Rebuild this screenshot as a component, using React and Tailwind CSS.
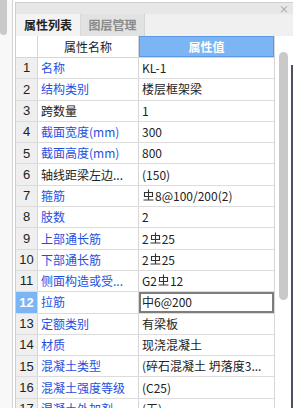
import React from 'react';

const rows = [
  { n: 1, name: '名称', value: 'KL-1', blue: true },
  { n: 2, name: '结构类别', value: '楼层框架梁', blue: true },
  { n: 3, name: '跨数量', value: '1', blue: false },
  { n: 4, name: '截面宽度(mm)', value: '300', blue: true },
  { n: 5, name: '截面高度(mm)', value: '800', blue: true },
  { n: 6, name: '轴线距梁左边...', value: '(150)', blue: false },
  { n: 7, name: '箍筋', value: '#8@100/200(2)', blue: true },
  { n: 8, name: '肢数', value: '2', blue: true },
  { n: 9, name: '上部通长筋', value: '2#25', blue: true },
  { n: 10, name: '下部通长筋', value: '2#25', blue: true },
  { n: 11, name: '侧面构造或受...', value: 'G2#12', blue: true },
  { n: 12, name: '拉筋', value: '中6@200', blue: true, active: true },
  { n: 13, name: '定额类别', value: '有梁板', blue: true },
  { n: 14, name: '材质', value: '现浇混凝土', blue: true },
  { n: 15, name: '混凝土类型', value: '(碎石混凝土 坍落度3...', blue: true },
  { n: 16, name: '混凝土强度等级', value: '(C25)', blue: true },
  { n: 17, name: '混凝土外加剂', value: '(无)', blue: true },
];

// HRB335 rebar mark
function Rebar() {
  return (
    <svg width="11" height="12" viewBox="0 0 11 12" className="inline-block mx-[1px] -mt-[2px]">
      <path d="M5.5 0.5 V11.5 M1.5 3.5 H9.5 V7.5 H1.5 Z M0.5 11 H10.5" stroke="#333" strokeWidth="1.1" fill="none" />
    </svg>
  );
}

function Val({ text }) {
  const parts = text.split('#');
  return (
    <>
      {parts.map((p, i) => (
        <React.Fragment key={i}>
          {i > 0 && <Rebar />}
          {p}
        </React.Fragment>
      ))}
    </>
  );
}

export default function App() {
  return (
    <div
      className="w-[293px] h-[408px] overflow-hidden flex bg-white text-[#222]"
      style={{ fontFamily: '"Noto Sans CJK SC", "Liberation Sans", sans-serif' }}
    >
      <div className="w-[13px] shrink-0 bg-[#f8f8f8] border-r border-[#d4d4d4]">
        <div className="w-[7px] h-[35px] bg-[#c9c9c9] rounded-br-[4px] rounded-bl-[4px]" />
      </div>
      <div className="w-[2px] shrink-0" />
      <div className="flex-1 flex flex-col pt-[2px] min-h-0">
        <div className="h-[12px] shrink-0 bg-[#e7e7e7] border-t border-l border-[#d0d0d0] flex justify-end items-center pr-[4px]">
          <span className="text-[10px] leading-none text-[#9a9a9a]">×</span>
        </div>
        <div className="h-[22px] shrink-0 bg-[#f0f0f0] border-l border-[#d0d0d0] flex items-stretch">
          <div className="w-[65px] bg-[#f3f3f3] border-r border-[#d8d8d8] flex items-center justify-center text-[12px] font-bold text-[#222]">
            属性列表
          </div>
          <div className="w-[64px] bg-[#e2e2e2] border-r border-[#d4d4d4] flex items-center justify-center text-[12px] font-bold text-[#8a8a8a]">
            图层管理
          </div>
        </div>
        <div className="flex-1 min-h-0 overflow-hidden flex border-l border-[#d0d0d0]">
          <div className="w-[258px] shrink-0 flex flex-col">
            <div className="h-[22px] shrink-0 flex border-b border-[#d6d6d6]">
              <div className="w-[22px] border-r border-[#d6d6d6]" />
              <div className="w-[101px] border-r border-[#d6d6d6] flex items-center justify-center text-[12px] text-[#222]">
                属性名称
              </div>
              <div className="flex-1 bg-[#7cb5f4] border border-[#5c9ae6] flex items-center justify-center text-[12px] font-bold text-white">
                属性值
              </div>
            </div>
            {rows.map((r) => (
              <div key={r.n} className="h-[21.3px] shrink-0 flex border-b border-[#dcdcdc]">
                <div
                  className={
                    r.active
                      ? 'w-[22px] bg-[#7cb5f4] border-r border-[#d6d6d6] flex items-center justify-center text-[13px] font-bold text-white'
                      : 'w-[22px] bg-[#efefef] border-r border-[#d6d6d6] flex items-center justify-center text-[13px] text-[#222]'
                  }
                  style={{ fontFamily: '"Liberation Sans", sans-serif' }}
                >
                  {r.n}
                </div>
                <div
                  className={
                    r.blue
                      ? 'w-[101px] border-r border-[#d6d6d6] flex items-center pl-[3px] text-[12px] text-[#1f4fe0] whitespace-nowrap overflow-hidden'
                      : 'w-[101px] border-r border-[#d6d6d6] flex items-center pl-[3px] text-[12px] text-[#222] whitespace-nowrap overflow-hidden'
                  }
                >
                  {r.name}
                </div>
                <div
                  className={
                    r.active
                      ? 'flex-1 border-2 border-[#7d7d7d] flex items-center pl-[1px] text-[12px] text-[#222] whitespace-nowrap overflow-hidden'
                      : 'flex-1 flex items-center pl-[3px] text-[12px] text-[#222] whitespace-nowrap overflow-hidden'
                  }
                >
                  <Val text={r.value} />
                </div>
              </div>
            ))}
          </div>
          <div className="flex-1 flex border-l border-[#d6d6d6]">
            <div className="flex-1 flex justify-center pt-[16px]">
              <div className="w-[9px] h-[248px] bg-[#c9c9c9] rounded-[5px]" />
            </div>
            <div className="w-[2px] flex flex-col">
              <div className="h-[29px]" />
              <div className="flex-1 bg-[#4a5262]" />
            </div>
          </div>
        </div>
      </div>
    </div>
  );
}
